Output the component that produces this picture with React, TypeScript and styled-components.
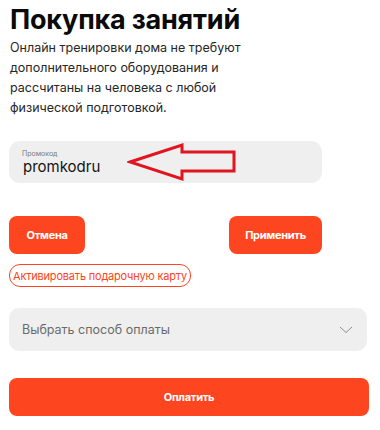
import React, { useState } from 'react';
import styled, { createGlobalStyle } from 'styled-components';

const ORANGE = '#fd4520';
const FIELD = '#efefef';

const GlobalStyle = createGlobalStyle`
	html, body {
		margin: 0;
		padding: 0;
		background: #ffffff;
	}
	body {
		font-family: Inter, "Noto Sans", sans-serif;
		color: #1c1c1c;
	}
`;

const Page = styled.div`
	display: flex;
	flex-direction: column;
	padding: 4px 11px 0 9px;
	width: 380px;
	box-sizing: border-box;
`;

const Title = styled.h1`
	margin: 0 0 0 1px;
	font-size: 27px;
	line-height: 32px;
	font-weight: 700;
	color: #0a0a0a;
	letter-spacing: -0.2px;
`;

const Lead = styled.p`
	margin: 2px 0 0 1px;
	width: 250px;
	font-size: 12.5px;
	line-height: 20px;
	color: #262626;
`;

const PromoBox = styled.div`
	position: relative;
	display: flex;
	flex-direction: column;
	justify-content: center;
	margin-top: 23px;
	width: 313px;
	height: 42px;
	padding: 0 13px;
	box-sizing: border-box;
	border-radius: 11px;
	background: ${FIELD};
`;

const PromoLabel = styled.span`
	font-size: 7px;
	line-height: 8px;
	color: #7a7a7a;
`;

const PromoValue = styled.span`
	font-size: 15px;
	line-height: 17px;
	color: #141414;
	margin-left: 1px;
`;

const Arrow = styled.svg`
	position: absolute;
	left: 118px;
	top: 1px;
`;

const ButtonRow = styled.div`
	display: flex;
	justify-content: space-between;
	margin-top: 33px;
	width: 313px;
`;

const OrangeButton = styled.button<{ $w: string }>`
	width: ${({ $w }) => $w};
	height: 38px;
	border: none;
	border-radius: 8px;
	background: ${ORANGE};
	color: #ffffff;
	font-family: Inter, "Noto Sans", sans-serif;
	font-size: 11px;
	font-weight: 700;
	letter-spacing: -0.3px;
	cursor: pointer;
`;

const GiftLink = styled.button`
	align-self: flex-start;
	margin-top: 10px;
	height: 23px;
	padding: 0 3px;
	border: 1px solid ${ORANGE};
	border-radius: 11px;
	background: #ffffff;
	color: ${ORANGE};
	font-family: Inter, "Noto Sans", sans-serif;
	font-size: 11px;
	letter-spacing: -0.2px;
`;

const SelectBox = styled.div`
	display: flex;
	align-items: center;
	justify-content: space-between;
	margin-top: 21px;
	width: 358px;
	height: 43px;
	padding: 0 14px 0 13px;
	box-sizing: border-box;
	border-radius: 10px;
	background: ${FIELD};
	font-size: 12.5px;
	color: #6b6b6b;
`;

const PayButton = styled(OrangeButton)`
	margin-top: 27px;
`;

const Chevron = () => (
	<svg width="14" height="8" viewBox="0 0 14 8" fill="none">
		<path d="M1 1 L7 6.5 L13 1" stroke="#8c8c8c" strokeWidth="1" />
	</svg>
)

const App = () => {
	const [code] = useState('promkodru')

	return (
		<>
			<GlobalStyle />
			<Page>
				<Title>Покупка занятий</Title>
				<Lead>
					Онлайн тренировки дома не требуют дополнительного оборудования и рассчитаны на человека с любой физической подготовкой.
				</Lead>
				<PromoBox>
					<PromoLabel>Промокод</PromoLabel>
					<PromoValue>{code}</PromoValue>
					{/* red pointer drawn on top of the field */}
					<Arrow width="112" height="40" viewBox="0 0 112 40" fill="none">
						<polygon
							points="3,20 55,3 55,10 107,10 107,29 55,29 55,37"
							stroke="#e0151f"
							strokeWidth="3"
							strokeLinejoin="miter"
						/>
					</Arrow>
				</PromoBox>
				<ButtonRow>
					<OrangeButton $w="76px">Отмена</OrangeButton>
					<OrangeButton $w="93px">Применить</OrangeButton>
				</ButtonRow>
				<GiftLink>Активировать подарочную карту</GiftLink>
				<SelectBox>
					<span>Выбрать способ оплаты</span>
					<Chevron />
				</SelectBox>
				<PayButton $w="360px">Оплатить</PayButton>
			</Page>
		</>
	)
}

export default App;
